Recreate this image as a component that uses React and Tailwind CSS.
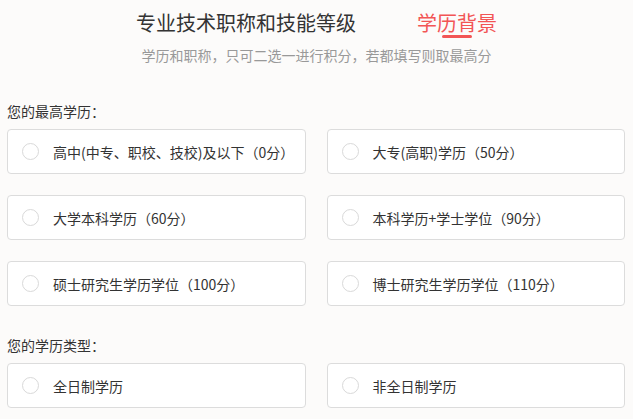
export default function App() {
  const font = { fontFamily: '"Noto Sans CJK SC", "Microsoft YaHei", sans-serif' };
  const edu = [
    "高中(中专、职校、技校)及以下（0分）",
    "大专(高职)学历（50分）",
    "大学本科学历（60分）",
    "本科学历+学士学位（90分）",
    "硕士研究生学历学位（100分）",
    "博士研究生学历学位（110分）",
  ];
  const types = ["全日制学历", "非全日制学历"];
  const Card = ({ text }) => (
    <div className="h-[45px] bg-white border border-[#dcdcdc] rounded-[4px] flex items-center pl-[14px]">
      <span className="w-[17px] h-[17px] rounded-full border border-[#d9d9d9] shrink-0" />
      <span className="ml-[14px] text-[14px] leading-[20px] text-[#333]">{text}</span>
    </div>
  );
  return (
    <div className="w-[633px] h-[419px] overflow-hidden bg-[#fcfbfa]" style={font}>
      <div className="pt-[11px] flex items-start justify-center gap-[61px]">
        <div className="text-[20px] leading-[24px] text-[#333]">专业技术职称和技能等级</div>
        <div className="flex flex-col items-center">
          <div className="text-[20px] leading-[24px] text-[#f25555]">学历背景</div>
          <div className="w-[30px] h-[3px] rounded-full bg-[#f25555]" />
        </div>
      </div>
      <div className="mt-[7px] text-center text-[14px] leading-[20px] text-[#999]">
        学历和职称，只可二选一进行积分，若都填写则取最高分
      </div>
      <div className="pl-[7px] pr-[8px]">
        <div className="mt-[36px] text-[14px] leading-[20px] text-[#333]">您的最高学历：</div>
        <div className="mt-[8px] grid grid-cols-2 gap-x-[21px] gap-y-[21px]">
          {edu.map((t) => (
            <Card key={t} text={t} />
          ))}
        </div>
        <div className="mt-[29px] text-[14px] leading-[20px] text-[#333]">您的学历类型：</div>
        <div className="mt-[8px] grid grid-cols-2 gap-x-[21px]">
          {types.map((t) => (
            <Card key={t} text={t} />
          ))}
        </div>
      </div>
    </div>
  );
}
